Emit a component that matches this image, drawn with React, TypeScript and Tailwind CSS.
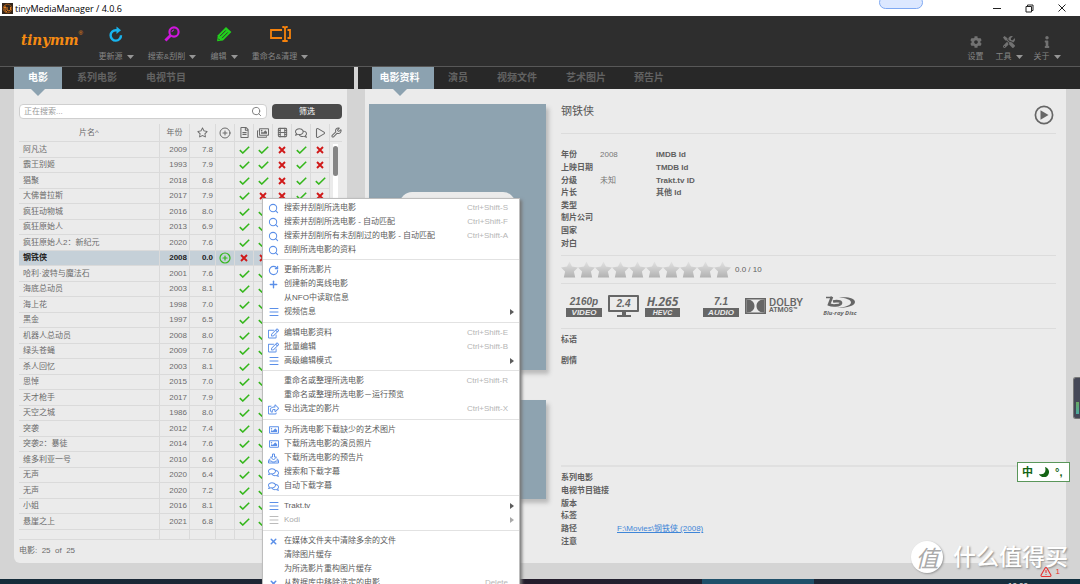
import React from "react";
import {
  CirclePlus,
  Film,
  Menu,
  Minus,
  Play,
  Plus,
  RotateCw,
  Search,
  TriangleAlert,
  Wrench,
  X,
} from "lucide-react";
import {
  FaCog,
  FaInfo,
  FaRegComments,
  FaRegEdit,
  FaRegFileAlt,
  FaRegImage,
  FaRegImages,
  FaRegShareSquare,
  FaRegStar,
  FaTools,
} from "react-icons/fa";

type Movie = { title: string; year: number; rating: string; marks?: string };

const movies: Movie[] = [
  { title: "阿凡达", year: 2009, rating: "7.8", marks: "yynyn" },
  { title: "霸王别姬", year: 1993, rating: "7.9", marks: "yynyn" },
  { title: "猖聚", year: 2018, rating: "6.8", marks: "yynyy" },
  { title: "大佛普拉斯", year: 2017, rating: "7.9", marks: "ynnyn" },
  { title: "疯狂动物城", year: 2016, rating: "8.0" },
  { title: "疯狂原始人", year: 2013, rating: "6.9" },
  { title: "疯狂原始人2：新纪元", year: 2020, rating: "7.6" },
  { title: "钢铁侠", year: 2008, rating: "0.0", marks: "nnnnn" },
  { title: "哈利·波特与魔法石", year: 2001, rating: "7.6" },
  { title: "海底总动员", year: 2003, rating: "8.1" },
  { title: "海上花", year: 1998, rating: "7.0" },
  { title: "黑金", year: 1997, rating: "6.5" },
  { title: "机器人总动员", year: 2008, rating: "8.0" },
  { title: "绿头苍蝇", year: 2009, rating: "7.6" },
  { title: "杀人回忆", year: 2003, rating: "8.1" },
  { title: "思悼", year: 2015, rating: "7.0" },
  { title: "天才枪手", year: 2017, rating: "7.9" },
  { title: "天空之城", year: 1986, rating: "8.0" },
  { title: "突袭", year: 2012, rating: "7.4" },
  { title: "突袭2：暴徒", year: 2014, rating: "7.6" },
  { title: "维多利亚一号", year: 2010, rating: "6.6" },
  { title: "无声", year: 2020, rating: "6.4" },
  { title: "无声", year: 2020, rating: "7.2" },
  { title: "小姐", year: 2016, rating: "8.1" },
  { title: "悬崖之上", year: 2021, rating: "6.8" },
];

type Item = {
  label: string;
  icon?: React.ReactNode;
  keys?: string;
  sub?: boolean;
  disabled?: boolean;
};

const search = <Search size={11} strokeWidth={2.2} />;
const lines = <Menu size={12} strokeWidth={2} />;
const edit = <FaRegEdit size={11} />;
const image = <FaRegImage size={10} />;
const chat = <FaRegComments size={11} />;
const cross = <X size={9} strokeWidth={4} />;

const inbox = (
  <svg width="11" height="11" viewBox="0 0 22 22" fill="none" stroke="currentColor" strokeWidth="2">
    <path d="M9 2h4v6h4l-6 6-6-6h4zM5 12H3l-2 4v4h20v-4l-2-4h-2M2 16h5l1 2h6l1-2h5" strokeLinejoin="round" />
  </svg>
);

const menu: Item[][] = [
  [
    { label: "搜索并刮削所选电影", icon: search, keys: "Ctrl+Shift-S" },
    { label: "搜索并刮削所选电影 - 自动匹配", icon: search, keys: "Ctrl+Shift-F" },
    { label: "搜索并刮削所有未刮削过的电影 - 自动匹配", icon: search, keys: "Ctrl+Shift-A" },
    { label: "刮削所选电影的资料", icon: search },
  ],
  [
    { label: "更新所选影片", icon: <RotateCw size={11} strokeWidth={2.4} /> },
    { label: "创建新的离线电影", icon: <Plus size={11} strokeWidth={3} /> },
    { label: "从NFO中读取信息" },
    { label: "视频信息", icon: lines, sub: true },
  ],
  [
    { label: "编辑电影资料", icon: edit, keys: "Ctrl+Shift-E" },
    { label: "批量编辑", icon: edit, keys: "Ctrl+Shift-B" },
    { label: "高级编辑模式", icon: lines, sub: true },
  ],
  [
    { label: "重命名或整理所选电影", keys: "Ctrl+Shift-R" },
    { label: "重命名或整理所选电影－运行预览" },
    { label: "导出选定的影片", icon: <FaRegShareSquare size={11} />, keys: "Ctrl+Shift-X" },
  ],
  [
    { label: "为所选电影下载缺少的艺术图片", icon: image },
    { label: "下载所选电影的演员照片", icon: image },
    { label: "下载所选电影的预告片", icon: inbox },
    { label: "搜索和下载字幕", icon: chat },
    { label: "自动下载字幕", icon: chat },
  ],
  [
    { label: "Trakt.tv", icon: lines, sub: true },
    { label: "Kodi", icon: lines, sub: true, disabled: true },
  ],
  [
    { label: "在媒体文件夹中清除多余的文件", icon: cross },
    { label: "清除图片缓存" },
    { label: "为所选影片重构图片缓存" },
    { label: "从数据库中移除选定的电影", icon: cross, keys: "Delete" },
  ],
];

function Caret() {
  return (
    <svg width="7" height="4" viewBox="0 0 7 4" fill="#969696">
      <path d="M0 0h7L3.5 4z" />
    </svg>
  );
}

function Mark({ ok }: { ok: boolean }) {
  return ok ? (
    <svg className="mx-auto" width="11" height="8" viewBox="0 0 11 8" fill="none" stroke="#35b71c" strokeWidth="1.6">
      <path d="M.8 4.2 3.8 7 10.2.8" />
    </svg>
  ) : (
    <svg className="mx-auto" width="8" height="8" viewBox="0 0 8 8" fill="none" stroke="#d01818" strokeWidth="1.9">
      <path d="M1 1l6 6M7 1 1 7" />
    </svg>
  );
}

function ToolButton({ icon, label, caret = true, width }: { icon: React.ReactNode; label: string; caret?: boolean; width: string }) {
  return (
    <button className={`flex h-full flex-col items-center justify-between text-[8px] leading-[10px] text-[#868686] ${width}`}>
      <span className="flex h-5 items-center">{icon}</span>
      <span className="flex items-center gap-1 whitespace-nowrap">
        {label}
        {caret && <Caret />}
      </span>
    </button>
  );
}

function Tab({ label, active, width }: { label: string; active?: boolean; width: string }) {
  return (
    <button
      role="tab"
      aria-selected={!!active}
      className={`h-full text-[10px] leading-none font-bold ${width} ${active ? "bg-[#8ca2b0] text-white" : "text-[#626262]"}`}
    >
      <span className="relative flex h-full items-center justify-center whitespace-nowrap">
        {label}
        {active && (
          <svg className="absolute top-full left-1/2 -ml-[7px]" width="14" height="7" viewBox="0 0 14 7" fill="#8ca2b0">
            <path d="M0 0h14L7 7z" />
          </svg>
        )}
      </span>
    </button>
  );
}

function Toolbar() {
  return (
    <header className="flex h-[51px] shrink-0 items-stretch border-b border-[#585858] bg-[#2e2e2e]">
      <div className="flex w-[98px] shrink-0 pt-3 pl-[21px] text-[#f68b12]">
        <span className="font-['DejaVu_Serif_Condensed','DejaVu_Serif',serif] text-[15px] leading-6 font-bold italic">tinymm</span>
        <span className="text-[6px] leading-[10px]">®</span>
      </div>
      <div className="flex gap-[13px] pt-2 pb-1">
        <ToolButton
          width="w-9"
          label="更新源"
          icon={
            <svg width="14" height="16" viewBox="0 0 14 16" fill="none" stroke="#18b4ee" strokeWidth="2.4">
              <path d="M12 9.2A5.2 5.2 0 1 1 7 4.2h1.5" />
              <path d="M7.5.4 12 4.3 7.5 8z" fill="#18b4ee" stroke="none" />
            </svg>
          }
        />
        <ToolButton
          width="w-[50px]"
          label="搜索&刮削"
          icon={
            <svg width="16" height="16" viewBox="0 0 16 16" fill="none" stroke="#cf16dc">
              <circle cx="10" cy="6" r="4.6" strokeWidth="2.1" />
              <path d="M6.5 9.5 1.4 14.6" strokeWidth="2.8" />
              <path d="M8 6a2 2 0 0 1 2-2" strokeWidth="1" />
            </svg>
          }
        />
        <ToolButton
          width="w-7"
          label="编辑"
          icon={
            <svg width="16" height="16" viewBox="0 0 16 16">
              <path d="M10 1 15.4 6 7 14.4 1 15.2 1.8 9.2z" fill="#22cf1c" />
              <path d="m4 10.200 5.800-5.800M6 12.200l5.800-5.800M2.200 12.600l1.500 1.500" stroke="#2e2e2e" strokeWidth=".9" />
            </svg>
          }
        />
        <ToolButton
          width="w-[58px]"
          label="重命名&清理"
          icon={
            <svg width="21" height="16" viewBox="0 0 21 16" fill="none" stroke="#f6820c" strokeWidth="1.8">
              <path d="M12 4H1v8h11M17.5 4H20v8h-2.5M12.3 1h1.5l1.2 1 1.2-1h1.5M12.3 15h1.5l1.2-1 1.2 1h1.5M15 2v12" />
            </svg>
          }
        />
      </div>
      <div className="ml-auto flex gap-3 pt-4 pr-5 pb-1">
        <ToolButton width="w-[17px]" caret={false} label="设置" icon={<FaCog size={12} color="#727272" />} />
        <ToolButton width="w-[26px]" label="工具" icon={<FaTools size={12} color="#727272" />} />
        <ToolButton width="w-[26px]" label="关于" icon={<FaInfo size={12} color="#727272" />} />
      </div>
    </header>
  );
}

const headIcons = [
  <FaRegStar key="s" size={11} />,
  <CirclePlus key="p" size={12} strokeWidth={2} />,
  <FaRegFileAlt key="f" size={11} />,
  <FaRegImages key="i" size={12} />,
  <Film key="m" size={11} strokeWidth={2.2} />,
  <FaRegComments key="c" size={12} />,
  <Play key="l" size={12} strokeWidth={2.2} />,
  <Wrench key="w" size={11} strokeWidth={2.2} />,
];

function MovieList() {
  const cell = "border-r border-b border-[#dadada] p-0";
  return (
    <section className="flex w-[354px] shrink-0 flex-col">
      <div role="tablist" className="flex h-[22px] shrink-0 bg-[#282828] pl-[14px]">
        <Tab label="电影" active width="w-12" />
        <Tab label="系列电影" width="w-[70px]" />
        <Tab label="电视节目" width="w-[68px]" />
      </div>
      <div className="mr-[7px] mb-4 ml-[14px] flex flex-1 flex-col rounded-b-md bg-[#ebebeb] px-[5px] pt-[15px]">
        <div className="flex gap-[5px]">
          <label className="flex h-[15px] flex-1 items-center rounded border border-[#cfcfcf] bg-white pr-1 pl-1">
            <input
              aria-label="搜索"
              placeholder="正在搜索..."
              className="min-w-0 flex-1 bg-transparent text-[8px] leading-none outline-none placeholder:text-[#999]"
            />
            <Search size={11} strokeWidth={2} color="#777" />
          </label>
          <button className="h-[15px] w-[70px] rounded bg-[#4a4a4a] text-[8px] leading-none text-white">筛选</button>
        </div>
        <div className="relative mt-[5px]">
          <table className="w-full table-fixed border-separate border-spacing-0 text-[8px] leading-none text-[#6b6b6b]">
            <colgroup>
              <col />
              <col className="w-[30px]" />
              <col className="w-[26px]" />
              <col className="w-[19px]" />
              <col className="w-[19px]" />
              <col className="w-[19px]" />
              <col className="w-[19px]" />
              <col className="w-[19px]" />
              <col className="w-[19px]" />
              <col className="w-[12px]" />
            </colgroup>
            <thead>
              <tr className="h-[18px]">
                <th className={`${cell} font-normal`}>片名^</th>
                <th className={`${cell} font-normal`}>年份</th>
                {headIcons.map((icon, i) => (
                  <th key={i} className={i === 7 ? "border-b border-[#dadada] p-0" : cell}>
                    <span className="flex justify-center">{icon}</span>
                  </th>
                ))}
              </tr>
            </thead>
            <tbody>
              {movies.map((m, i) => {
                const selected = m.title === "钢铁侠";
                return (
                  <tr
                    key={i}
                    className={`odd:h-4 even:h-[15px] ${selected ? "bg-[#c5d0d8] font-bold text-[#222]" : ""}`}
                  >
                    <td className={`${cell} overflow-hidden pl-1 whitespace-nowrap`}>{m.title}</td>
                    <td className={`${cell} pr-[2px] text-right`}>{m.year}</td>
                    <td className={`${cell} pr-[2px] text-right`}>{m.rating}</td>
                    <td className={cell}>
                      {selected && <CirclePlus className="mx-auto" size={12} strokeWidth={2.4} color="#35b71c" />}
                    </td>
                    {(m.marks ?? "yyyyy").split("").map((c, k) => (
                      <td key={k} className={cell}>
                        <Mark ok={c === "y"} />
                      </td>
                    ))}
                    <td className="p-0" />
                  </tr>
                );
              })}
              <tr className="h-[10px]">
                {Array.from({ length: 9 }, (_, i) => (
                  <td key={i} className={cell} />
                ))}
                <td className="border-b border-[#dadada] p-0" />
              </tr>
            </tbody>
          </table>
          <div className="absolute top-5 right-1 bottom-3 w-[5px] bg-white">
            <div className="mt-[2px] h-[30px] rounded-full bg-[#858585]" />
          </div>
        </div>
        <p className="pt-[6px] text-[8px] leading-[10px] whitespace-pre text-[#6b6b6b]">电影:  25  of  25</p>
      </div>
    </section>
  );
}

const badge = "bg-[#666] text-center text-[8px] leading-[9px] font-bold text-[#ebebeb]";

function MediaInfo() {
  return (
    <div className="flex h-[45px] items-center border-b border-[#dcdcdc] pl-[5px] text-[#666]">
      <div className="w-9 text-center italic">
        <p className="text-[10px] leading-[12px] font-bold">2160p</p>
        <p className={badge}>VIDEO</p>
      </div>
      <div className="ml-[6px] flex w-[31px] flex-col items-center">
        <p className="w-full rounded-[1px] border-2 border-[#666] text-center text-[10px] leading-[13px] font-bold italic">2.4</p>
        <svg width="14" height="5" viewBox="0 0 14 5" fill="#666">
          <path d="M5 0h4v3h5v2H0V3h5z" />
        </svg>
      </div>
      <div className="ml-[6px] w-[35px] text-center italic">
        <p className="font-['Open_Sans',sans-serif] text-[12px] leading-[12px] font-bold">H.265</p>
        <p className="bg-[#666] text-center text-[7px] leading-[9px] font-bold text-[#ebebeb]">HEVC</p>
      </div>
      <div className="ml-[23px] w-9 text-center italic">
        <p className="text-[10px] leading-[12px] font-bold">7.1</p>
        <p className={badge}>AUDIO</p>
      </div>
      <div className="ml-[6px] flex items-center gap-[3px]">
        <svg width="21" height="16" viewBox="0 0 21 16">
          <path d="M0 0h21v16H0z" fill="#666" />
          <path d="M1.500 1.500h18v13h-18z" fill="#ebebeb" />
          <path d="M1.500 1.500h1c4.500 0 7 3 7 6.500s-2.500 6.500-7 6.500h-1zM19.500 1.500h-1c-4.500 0-7 3-7 6.500s2.500 6.500 7 6.500h1z" fill="#666" />
        </svg>
        <div className="w-[35px] font-['Roboto',sans-serif] whitespace-nowrap">
          <p className="text-[11px] leading-[9px] font-medium">DOLBY</p>
          <p className="text-[7px] leading-[7px] font-bold">ATMOS™</p>
        </div>
      </div>
      <div className="ml-[18px] flex w-9 flex-col items-center">
        <svg width="34" height="14" viewBox="0 0 34 14" fill="none" stroke="#666">
          <path d="M16 1.500c9.500-1 16 1 16 4.500s-7 6-18 6c8-.500 14-2.500 14-5.700 0-2.500-5-4.300-12-4.800z" fill="#666" stroke="none" />
          <path d="M9 .8 6 8.500c3 1.500 11 1.300 12-1.300.600-2.200-4.500-2.500-8-1.700" strokeWidth="2.600" />
          <path d="M3 1.500h6" strokeWidth="1.500" />
        </svg>
        <p className="font-['Open_Sans',sans-serif] text-[6px] leading-[6px] font-bold whitespace-nowrap italic">Blu-ray Disc</p>
      </div>
    </div>
  );
}

const facts: [string, string, string][] = [
  ["年份", "2008", "IMDB Id"],
  ["上映日期", "", "TMDB Id"],
  ["分级", "未知", "Trakt.tv ID"],
  ["片长", "", "其他 Id"],
  ["类型", "", ""],
  ["制片公司", "", ""],
  ["国家", "", ""],
  ["对白", "", ""],
];

const extras = ["系列电影", "电视节目链接", "版本", "标签", "路径", "注意"];

function Details() {
  return (
    <div className="mr-[10px] ml-[15px] flex flex-1 flex-col text-[8px] leading-none text-[#5f5f5f]">
      <div className="flex h-[45px] items-center justify-between border-b border-[#dcdcdc]">
        <h1 className="text-[11px] text-[#555]">钢铁侠</h1>
        <button aria-label="播放" className="mt-2 mr-[2px]">
          <svg width="20" height="20" viewBox="0 0 20 20">
            <circle cx="10" cy="10" r="8.600" fill="none" stroke="#666" strokeWidth="1.700" />
            <path d="M6.500 5.200v9.600l8-4.800z" fill="#666" />
          </svg>
        </button>
      </div>
      <div className="h-[122px] border-b border-[#dcdcdc] pt-[15px]">
        <dl className="grid h-[101px] auto-rows-fr">
          {facts.map(([name, value, id]) => (
            <div key={name} className="flex items-center">
              <dt className="w-[39px] font-bold whitespace-nowrap">{name}</dt>
              <dd className="w-14 text-[#777]">{value}</dd>
              <dt className="font-bold">{id}</dt>
            </div>
          ))}
        </dl>
      </div>
      <div className="flex h-7 items-center border-b border-[#dcdcdc]">
        <svg width="170" height="17" viewBox="0 0 170 17" role="img" aria-label="0.0 / 10">
          <defs>
            <linearGradient id="star" x1="0" y1="0" x2="0" y2="1">
              <stop offset="0" stopColor="#e2e2e2" />
              <stop offset="1" stopColor="#b2b2b2" />
            </linearGradient>
          </defs>
          {Array.from({ length: 10 }, (_, i) => (
            <path
              key={i}
              transform={`translate(${i * 17} 0)`}
              d="M8.500.600 11 5.500l6 .900-4.100 4.100 1.300 5.900H2.800l1.300-5.900L0 6.400l6-.9z"
              fill="url(#star)"
            />
          ))}
        </svg>
        <span className="ml-1">0.0 / 10</span>
      </div>
      <MediaInfo />
      <div className="flex flex-1 flex-col gap-[13px] pt-[7px] font-bold">
        <h2>标语</h2>
        <h2>剧情</h2>
      </div>
      <div className="h-[98px] border-t-2 border-[#e0e0e0] pt-[5px]">
        <dl className="grid h-[76px] auto-rows-fr">
          {extras.map((name) => (
            <div key={name} className="flex items-center">
              <dt className="w-14 font-bold whitespace-nowrap">{name}</dt>
              <dd>
                {name === "路径" && (
                  <a href="#path" className="text-[#3f86d8] underline">
                    F:\Movies\钢铁侠 (2008)
                  </a>
                )}
              </dd>
            </div>
          ))}
        </dl>
      </div>
    </div>
  );
}

function DetailPane() {
  return (
    <section className="flex min-w-0 flex-1 flex-col">
      <div role="tablist" className="flex h-[22px] shrink-0 bg-[#282828] pl-[14px]">
        <Tab label="电影资料" active width="w-[62px] pr-[7px]" />
        <Tab label="演员" width="w-12" />
        <Tab label="视频文件" width="w-[70px]" />
        <Tab label="艺术图片" width="w-[68px]" />
        <Tab label="预告片" width="w-[58px]" />
      </div>
      <div className="mr-[14px] mb-4 ml-[7px] flex flex-1 bg-[#ebebeb] pl-1">
        <div className="flex w-[177px] shrink-0 flex-col gap-[30px] pt-[15px]">
          <div className="h-[266px] bg-[#8ea3b0] px-[31px] pt-[88px] shadow-[3px_4px_4px_#bbb]">
            <div className="h-[120px] rounded-xl bg-[#ebebeb]" />
          </div>
          <div className="h-[99px] bg-[#8ea3b0] shadow-[3px_4px_4px_#bbb]" />
        </div>
        <Details />
      </div>
    </section>
  );
}

function ContextMenu() {
  return (
    <div
      role="menu"
      className="absolute top-[198px] left-[262px] z-10 w-[258px] border border-[#bdbdbd] bg-white pt-[2px] pb-1 text-[8px] leading-none text-[#5c5c5c] shadow-[2px_2px_3px_#777]"
    >
      {menu.map((group, g) => (
        <div key={g} role="group" className="border-[#e2e2e2] not-first:border-t not-first:pt-[3px] even:pb-[3px] odd:pb-[2px]">
          {group.map((item) => (
            <button
              key={item.label}
              role="menuitem"
              disabled={item.disabled}
              className={`flex h-[14px] w-full items-center pr-[5px] ${item.disabled ? "text-[#aaa]" : ""}`}
            >
              <span className={`flex w-[21px] justify-center ${item.disabled ? "text-[#bbb]" : "text-[#5b8fe8]"}`}>
                {item.icon}
              </span>
              <span className="whitespace-nowrap">{item.label}</span>
              {item.keys && <span className="ml-auto pr-[6px] text-[#b5b5b5]">{item.keys}</span>}
              {item.sub && (
                <svg className="ml-auto" width="5" height="6" viewBox="0 0 5 6" fill="currentColor">
                  <path d="M1 0v6l4-3z" />
                </svg>
              )}
            </button>
          ))}
        </div>
      ))}
    </div>
  );
}

export default function App() {
  return (
    <div className="relative flex h-screen flex-col overflow-hidden bg-[#d4d4d4] font-['Liberation_Sans','Noto_Sans_CJK_SC',sans-serif]">
      <div className="flex h-4 shrink-0 items-center bg-white pl-[2px]">
        <svg width="11" height="11" viewBox="0 0 11 11">
          <rect width="11" height="11" fill="#33261c" />
          <path d="M3 2.500v4.700q0 1.600 2 1.300M5 4v3q2 2 3.500 0V4M2 4.500h2" stroke="#e88020" fill="none" />
          <circle cx="5.500" cy="5.500" r="4.300" stroke="#b86218" strokeWidth=".8" fill="none" />
        </svg>
        <span className="ml-[2px] font-['Open_Sans','Noto_Sans',sans-serif] text-[9px] leading-none text-black">
          tinyMediaManager / 4.0.6
        </span>
        <div className="mr-[14px] ml-auto flex items-center gap-6 text-[#222]">
          <button aria-label="最小化">
            <svg width="8" height="8" viewBox="0 0 8 8" fill="none" stroke="currentColor">
              <path d="M0 4.500h8" />
            </svg>
          </button>
          <button aria-label="还原">
            <svg width="9" height="9" viewBox="0 0 9 9" fill="none" stroke="currentColor">
              <path d="M1 2.500h5.500V8H1zM2.500 2.500V1H8v5.500H6.500" />
            </svg>
          </button>
          <button aria-label="关闭">
            <svg width="8" height="8" viewBox="0 0 8 8" fill="none" stroke="currentColor">
              <path d="m.5.5 7 7M7.500.5l-7 7" />
            </svg>
          </button>
        </div>
      </div>
      <Toolbar />
      <main className="flex min-h-0 flex-1 gap-1">
        <MovieList />
        <DetailPane />
      </main>
      <footer className="relative h-[5px] shrink-0 overflow-hidden bg-linear-to-r from-[#142c3a] via-[#241d2c] to-[#123040]">
        <div className="absolute top-0 left-[65%] h-full w-28 bg-[#20506a]" />
        <span className="absolute top-[3px] right-[52px] text-[8px] leading-none text-white">10:00</span>
      </footer>

      <div className="absolute -top-1 right-[157px] h-[13px] w-11 rounded-full border border-[#7fa9f2] bg-[#dce8ff]" />
      <ContextMenu />

      <div className="absolute top-[377px] right-0 flex h-[42px] w-[7px] items-end rounded-l-[3px] border border-r-0 border-[#777] bg-[#454857] pb-1 pl-[2px]">
        <div className="h-3 w-[3px] bg-linear-to-b from-[#6aa860] to-[#4aa8a0]" />
      </div>

      <div className="absolute top-[462px] right-[10px] flex h-5 w-[53px] items-center gap-[6px] border border-[#5a965a] bg-white pl-1 text-[11px] leading-none font-bold text-[#146414]">
        中
        <svg width="10" height="10" viewBox="0 0 10 10" fill="#146414">
          <path d="M6 0a5.200 5.200 0 1 1-6 7q4.500 1 6-2 .900-2.500 0-5z" />
        </svg>
        <span>°,</span>
      </div>

      <div className="absolute right-3 bottom-[11px] flex items-center gap-[10px] text-white">
        <span className="flex size-8 items-center justify-center rounded-full bg-white font-['Noto_Sans_CJK_SC',sans-serif] text-[23px] leading-none text-[#aaa] italic shadow-[1px_1px_2px_#999]">
          值
        </span>
        <span className="text-[23px] leading-8 font-medium [text-shadow:1px_1px_2px_#888]">什么值得买</span>
      </div>
      <div className="absolute right-[20px] bottom-[6px] flex items-center gap-1 text-[8px] leading-none text-[#e83030]">
        <TriangleAlert size={12} strokeWidth={2.200} />1
      </div>
    </div>
  );
}
